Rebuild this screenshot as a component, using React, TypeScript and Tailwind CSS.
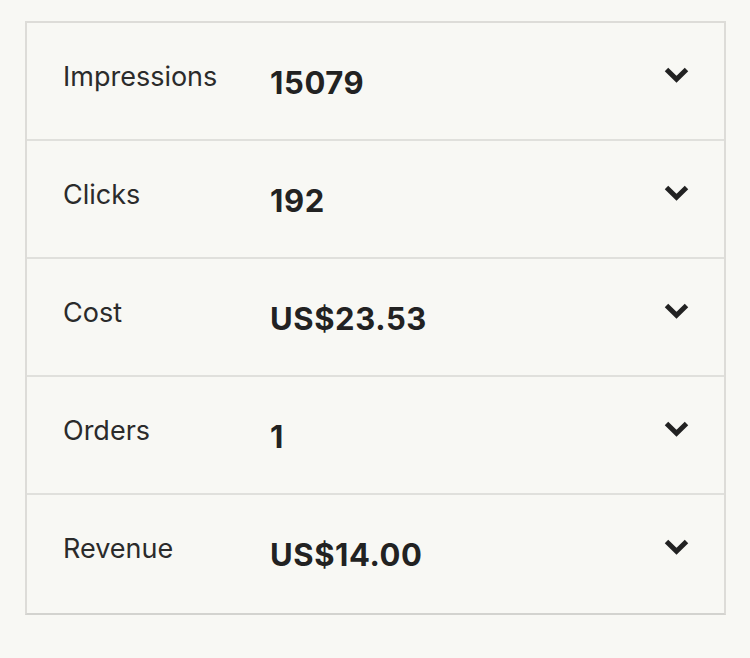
import React from 'react';

interface Metric {
  label: string;
  value: string;
}

const METRICS: Metric[] = [
  { label: 'Impressions', value: '15079' },
  { label: 'Clicks', value: '192' },
  { label: 'Cost', value: 'US$23.53' },
  { label: 'Orders', value: '1' },
  { label: 'Revenue', value: 'US$14.00' },
];

const Chevron = () => (
  <svg width="25" height="17" viewBox="0 0 25 17" fill="none">
    <path d="M2.5 3.5 L12.5 13.2 L22.5 3.5" stroke="currentColor" strokeWidth="5" strokeLinejoin="miter" />
  </svg>
);

const MetricRow: React.FC<{ metric: Metric; last: boolean }> = ({ metric, last }) => (
  <div className={`flex items-start h-[118px] ${last ? '' : 'border-b-2 border-[#e0e0dc]'}`}>
    <div className="w-[243px] pl-[36px] pt-[40px] text-[27px] leading-none text-[#2b2b2b]">
      {metric.label}
    </div>
    <div className="flex-1 pt-[44px] text-[31px] leading-none font-bold tracking-[0.6px] text-[#222]">
      {metric.value}
    </div>
    <div className="pr-[35px] pt-[43px] text-[#222]">
      <Chevron />
    </div>
  </div>
);

export default function App() {
  return (
    <div className="min-h-screen bg-[#f8f8f4] pt-[21px] px-[25px] font-['Inter',sans-serif]">
      <div className="w-[701px] border-2 border-[#dddcd8] border-b-[#d3d3cf]">
        {METRICS.map((m, i) => (
          <MetricRow key={m.label} metric={m} last={i === METRICS.length - 1} />
        ))}
      </div>
    </div>
  );
}
